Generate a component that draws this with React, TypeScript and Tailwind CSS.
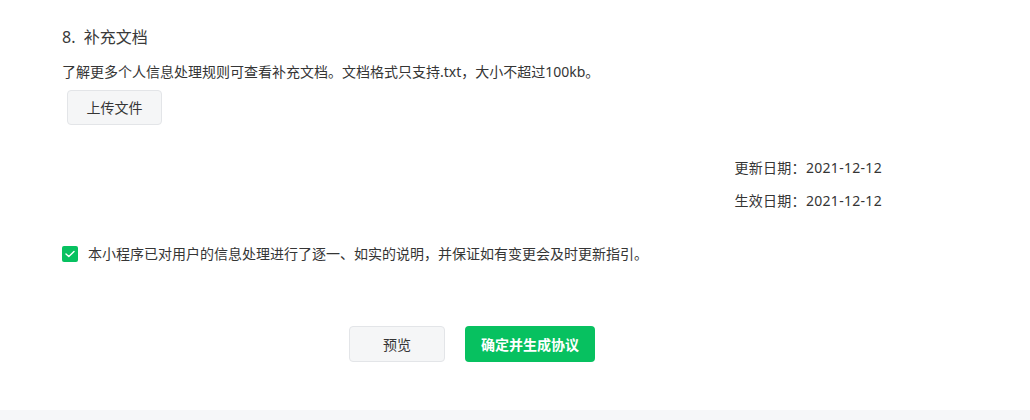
const App = () => {
  return (
    <div className="w-[1030px] h-[420px] bg-[#f6f7f9] flex flex-col text-[#353535]" style={{ fontFamily: '"Noto Sans", "Noto Sans CJK SC", sans-serif' }}>
      <div className="h-[410px] bg-white">
        <div className="ml-[62px] w-[820px] pt-[25px]">

          {/*--- Secção 8 ---*/}
          <h3 className="text-[16px] leading-[24px] font-normal text-[#3a3a3a]">8.&nbsp; 补充文档</h3>
          <p className="mt-[12px] text-[14px] leading-[22px]">了解更多个人信息处理规则可查看补充文档。文档格式只支持.txt，大小不超过100kb。</p>
          <button className="mt-[7px] ml-[5px] w-[95px] h-[35px] rounded-[4px] bg-[#f5f6f7] border border-[#e3e5e8] text-[14px] text-[#353535]">
            上传文件
          </button>

          {/*--- Datas ---*/}
          <div className="mt-[32px] flex justify-end">
            <div className="flex flex-col gap-[11px] text-[14px] leading-[22px] tracking-[0.3px]">
              <p>更新日期：2021-12-12</p>
              <p>生效日期：2021-12-12</p>
            </div>
          </div>

          {/*--- Checkbox ---*/}
          <label className="mt-[31px] flex items-center gap-[10px] text-[14px] leading-[22px]">
            <span className="w-[16px] h-[16px] rounded-[2px] bg-[#07c160] flex items-center justify-center">
              <svg width="10" height="8" viewBox="0 0 10 8" fill="none">
                <path d="M1 4 L3.8 6.6 L9 1.4" stroke="white" strokeWidth="1.4" strokeLinecap="round" strokeLinejoin="round" />
              </svg>
            </span>
            本小程序已对用户的信息处理进行了逐一、如实的说明，并保证如有变更会及时更新指引。
          </label>

          {/*--- Botões ---*/}
          <div className="mt-[61px] flex justify-center gap-[20px]">
            <button className="w-[96px] h-[36px] rounded-[4px] bg-[#f5f6f7] border border-[#e3e5e8] text-[14px] text-[#353535]">
              预览
            </button>
            <button className="w-[130px] h-[36px] rounded-[4px] bg-[#07c160] text-[14px] font-bold text-white">
              确定并生成协议
            </button>
          </div>
        </div>
      </div>
    </div>
  )
}

export default App
